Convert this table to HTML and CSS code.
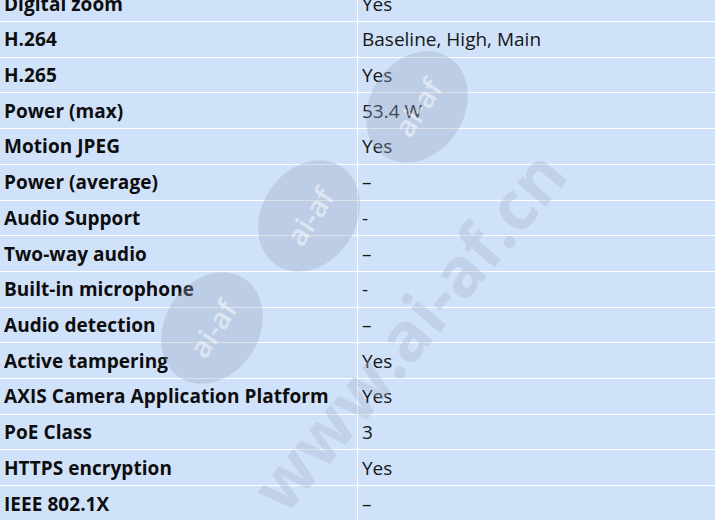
FILE: index.html
```html
<!DOCTYPE html>
<html>
<head>
<meta charset="utf-8">
<link rel="stylesheet" href="styles.css">
</head>
<body>
<div class="page">
  <div class="specs">
    <div class="row"><div class="k">Digital zoom</div><div class="v">Yes</div></div>
    <div class="row"><div class="k">H.264</div><div class="v">Baseline, High, Main</div></div>
    <div class="row"><div class="k">H.265</div><div class="v">Yes</div></div>
    <div class="row"><div class="k">Power (max)</div><div class="v">53.4 W</div></div>
    <div class="row"><div class="k">Motion JPEG</div><div class="v">Yes</div></div>
    <div class="row"><div class="k">Power (average)</div><div class="v">–</div></div>
    <div class="row"><div class="k">Audio Support</div><div class="v">-</div></div>
    <div class="row"><div class="k">Two-way audio</div><div class="v">–</div></div>
    <div class="row"><div class="k">Built-in microphone</div><div class="v">-</div></div>
    <div class="row"><div class="k">Audio detection</div><div class="v">–</div></div>
    <div class="row"><div class="k">Active tampering</div><div class="v">Yes</div></div>
    <div class="row"><div class="k">AXIS Camera Application Platform</div><div class="v">Yes</div></div>
    <div class="row"><div class="k">PoE Class</div><div class="v">3</div></div>
    <div class="row"><div class="k">HTTPS encryption</div><div class="v">Yes</div></div>
    <div class="row"><div class="k">IEEE 802.1X</div><div class="v">–</div></div>
  </div>
  <div class="wm">
    <div class="blob blob1"><span>ai-af</span></div>
    <div class="blob blob2"><span>ai-af</span></div>
    <div class="blob blob3"><span>ai-af</span></div>
    <div class="url">www.ai-af.cn</div>
  </div>
</div>
</body>
</html>
```
FILE: styles.css
```css
html, body {
  margin: 0;
  padding: 0;
  background: #d0e2f9;
  overflow: hidden;
}
.page {
  position: relative;
  width: 715px;
  height: 520px;
  overflow: hidden;
  background: #d0e2f9;
}
.specs {
  margin-top: -13.7px;
  display: flex;
  flex-direction: column;
}
.row {
  display: grid;
  grid-template-columns: 358px 1fr;
  height: 35.71px;
  box-sizing: border-box;
  border-bottom: 1px solid #ffffff;
}
.k, .v {
  display: flex;
  align-items: center;
  white-space: nowrap;
  font-family: "Open Sans", "Noto Sans", sans-serif;
  font-size: 19px;
}
.k {
  font-weight: 700;
  color: #0d0d0d;
  padding-left: 4px;
  border-right: 1px solid #ffffff;
  letter-spacing: 0.05px;
}
.v {
  padding-left: 4px;
  color: #161616;
}
.wm {
  position: absolute;
  inset: 0;
  pointer-events: none;
}
.blob {
  position: absolute;
  width: 118px;
  height: 94px;
  border-radius: 50%;
  background: rgba(150, 165, 190, 0.34);
  transform: rotate(-57deg);
  display: flex;
  align-items: center;
  justify-content: center;
}
.blob span {
  font-family: "Open Sans", sans-serif;
  font-weight: 600;
  font-size: 29px;
  color: rgba(255, 255, 255, 0.5);
}
.blob1 { left: 358px; top: 60px; }
.blob2 { left: 250px; top: 169px; }
.blob3 { left: 153px; top: 281px; }
.url {
  position: absolute;
  left: 158px;
  top: 290px;
  width: 500px;
  text-align: center;
  font-family: "Open Sans", sans-serif;
  font-weight: 700;
  font-size: 68px;
  line-height: 80px;
  color: rgba(160, 175, 200, 0.33);
  transform: rotate(-50deg);
}
```
